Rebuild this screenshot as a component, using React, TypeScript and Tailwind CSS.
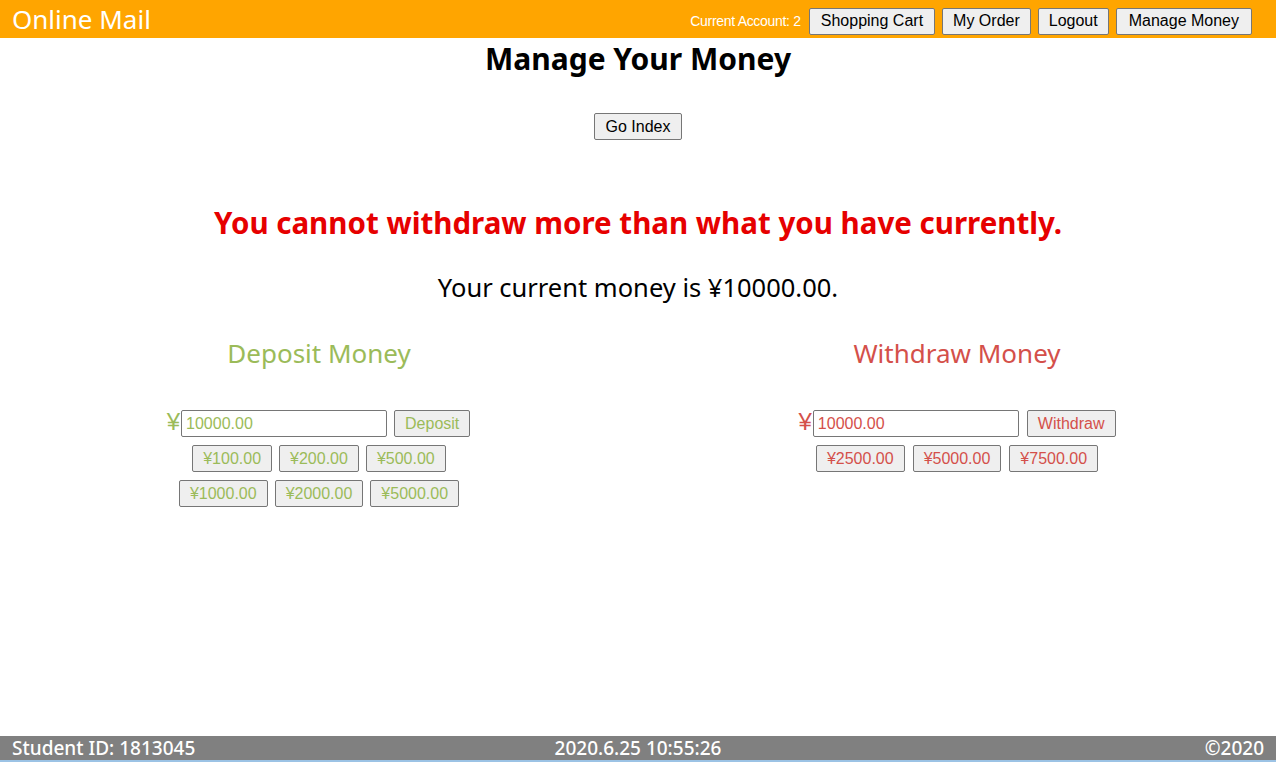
import React from 'react';

const btn =
  "h-[27px] px-[10px] bg-[#efefef] border border-[#767676] rounded-[2px] text-[16px] leading-none [font-family:'Liberation_Sans',Arial,sans-serif]";

export default function App() {
  const deposits = [['¥100.00', '¥200.00', '¥500.00'], ['¥1000.00', '¥2000.00', '¥5000.00']];
  const withdraws = ['¥2500.00', '¥5000.00', '¥7500.00'];

  return (
    <div className="h-[762px] w-full flex flex-col bg-white [font-family:'Noto_Sans',sans-serif] overflow-hidden">
      {/* Header */}
      <div className="h-[38px] bg-[#ffa500] flex items-center justify-between pl-[12px] pr-[24px] shrink-0">
        <span className="text-white text-[26px] leading-none">Online Mail</span>
        <div className="flex items-center gap-[7px] mt-[4px]">
          <span className="text-white text-[14px] mr-[1px] [font-family:'Liberation_Sans',Arial,sans-serif] tracking-[-0.3px]">
            Current Account: 2
          </span>
          <button className={`${btn} h-[26px] px-[11px] text-black`}>Shopping Cart</button>
          <button className={`${btn} h-[26px] text-black`}>My Order</button>
          <button className={`${btn} h-[26px] text-black`}>Logout</button>
          <button className={`${btn} h-[26px] px-[12px] text-black`}>Manage Money</button>
        </div>
      </div>

      {/* Main */}
      <div className="flex-1 flex flex-col items-center">
        <h1 className="mt-[6px] text-[30px] font-bold leading-none text-black">Manage Your Money</h1>
        <button className={`${btn} mt-[39px] w-[88px] text-black`}>Go Index</button>
        <p className="mt-[68px] text-[29.5px] font-bold leading-none text-[#e60000]">
          You cannot withdraw more than what you have currently.
        </p>
        <p className="mt-[37px] text-[25.5px] leading-none text-black">Your current money is ¥10000.00.</p>

        <div className="w-full grid grid-cols-2 mt-[40px]">
          {/* Deposit */}
          <div className="flex flex-col items-center">
            <h2 className="text-[26px] leading-none text-[#9bbb59]">Deposit Money</h2>
            <div className="mt-[44px] flex items-start">
              <span className="text-[24px] leading-none text-[#9bbb59] mr-[1px] -ml-[1px] [font-family:'Liberation_Sans',Arial,sans-serif]">¥</span>
              <input
                defaultValue="10000.00"
                className="w-[206px] h-[27px] px-[4px] border border-[#767676] rounded-[2px] text-[16px] text-[#9bbb59] outline-none [font-family:'Liberation_Sans',Arial,sans-serif]"
              />
              <button className={`${btn} ml-[7px] text-[#9bbb59]`}>Deposit</button>
            </div>
            <div className="flex flex-col items-center gap-[8px] mt-[8px]">
              {deposits.map((row, i) => (
                <div key={i} className="flex gap-[7px]">
                  {row.map((v) => (
                    <button key={v} className={`${btn} text-[#9bbb59]`}>
                      {v}
                    </button>
                  ))}
                </div>
              ))}
            </div>
          </div>

          {/* Withdraw */}
          <div className="flex flex-col items-center">
            <h2 className="text-[26px] leading-none text-[#d4504a]">Withdraw Money</h2>
            <div className="mt-[44px] flex items-start">
              <span className="text-[24px] leading-none text-[#d4504a] mr-[1px] [font-family:'Liberation_Sans',Arial,sans-serif]">¥</span>
              <input
                defaultValue="10000.00"
                className="w-[206px] h-[27px] px-[4px] border border-[#767676] rounded-[2px] text-[16px] text-[#d4504a] outline-none [font-family:'Liberation_Sans',Arial,sans-serif]"
              />
              <button className={`${btn} ml-[8px] text-[#d4504a]`}>Withdraw</button>
            </div>
            <div className="flex gap-[8px] mt-[8px]">
              {withdraws.map((v) => (
                <button key={v} className={`${btn} text-[#d4504a]`}>
                  {v}
                </button>
              ))}
            </div>
          </div>
        </div>
      </div>

      {/* Footer */}
      <div className="h-[24px] bg-[#808080] grid grid-cols-3 items-center px-[12px] text-white text-[19px] font-medium leading-none shrink-0">
        <span>Student ID: 1813045</span>
        <span className="text-center">2020.6.25 10:55:26</span>
        <span className="text-right">©2020</span>
      </div>
      <div className="h-[2px] bg-[#9cc3e5] shrink-0" />
    </div>
  );
}
